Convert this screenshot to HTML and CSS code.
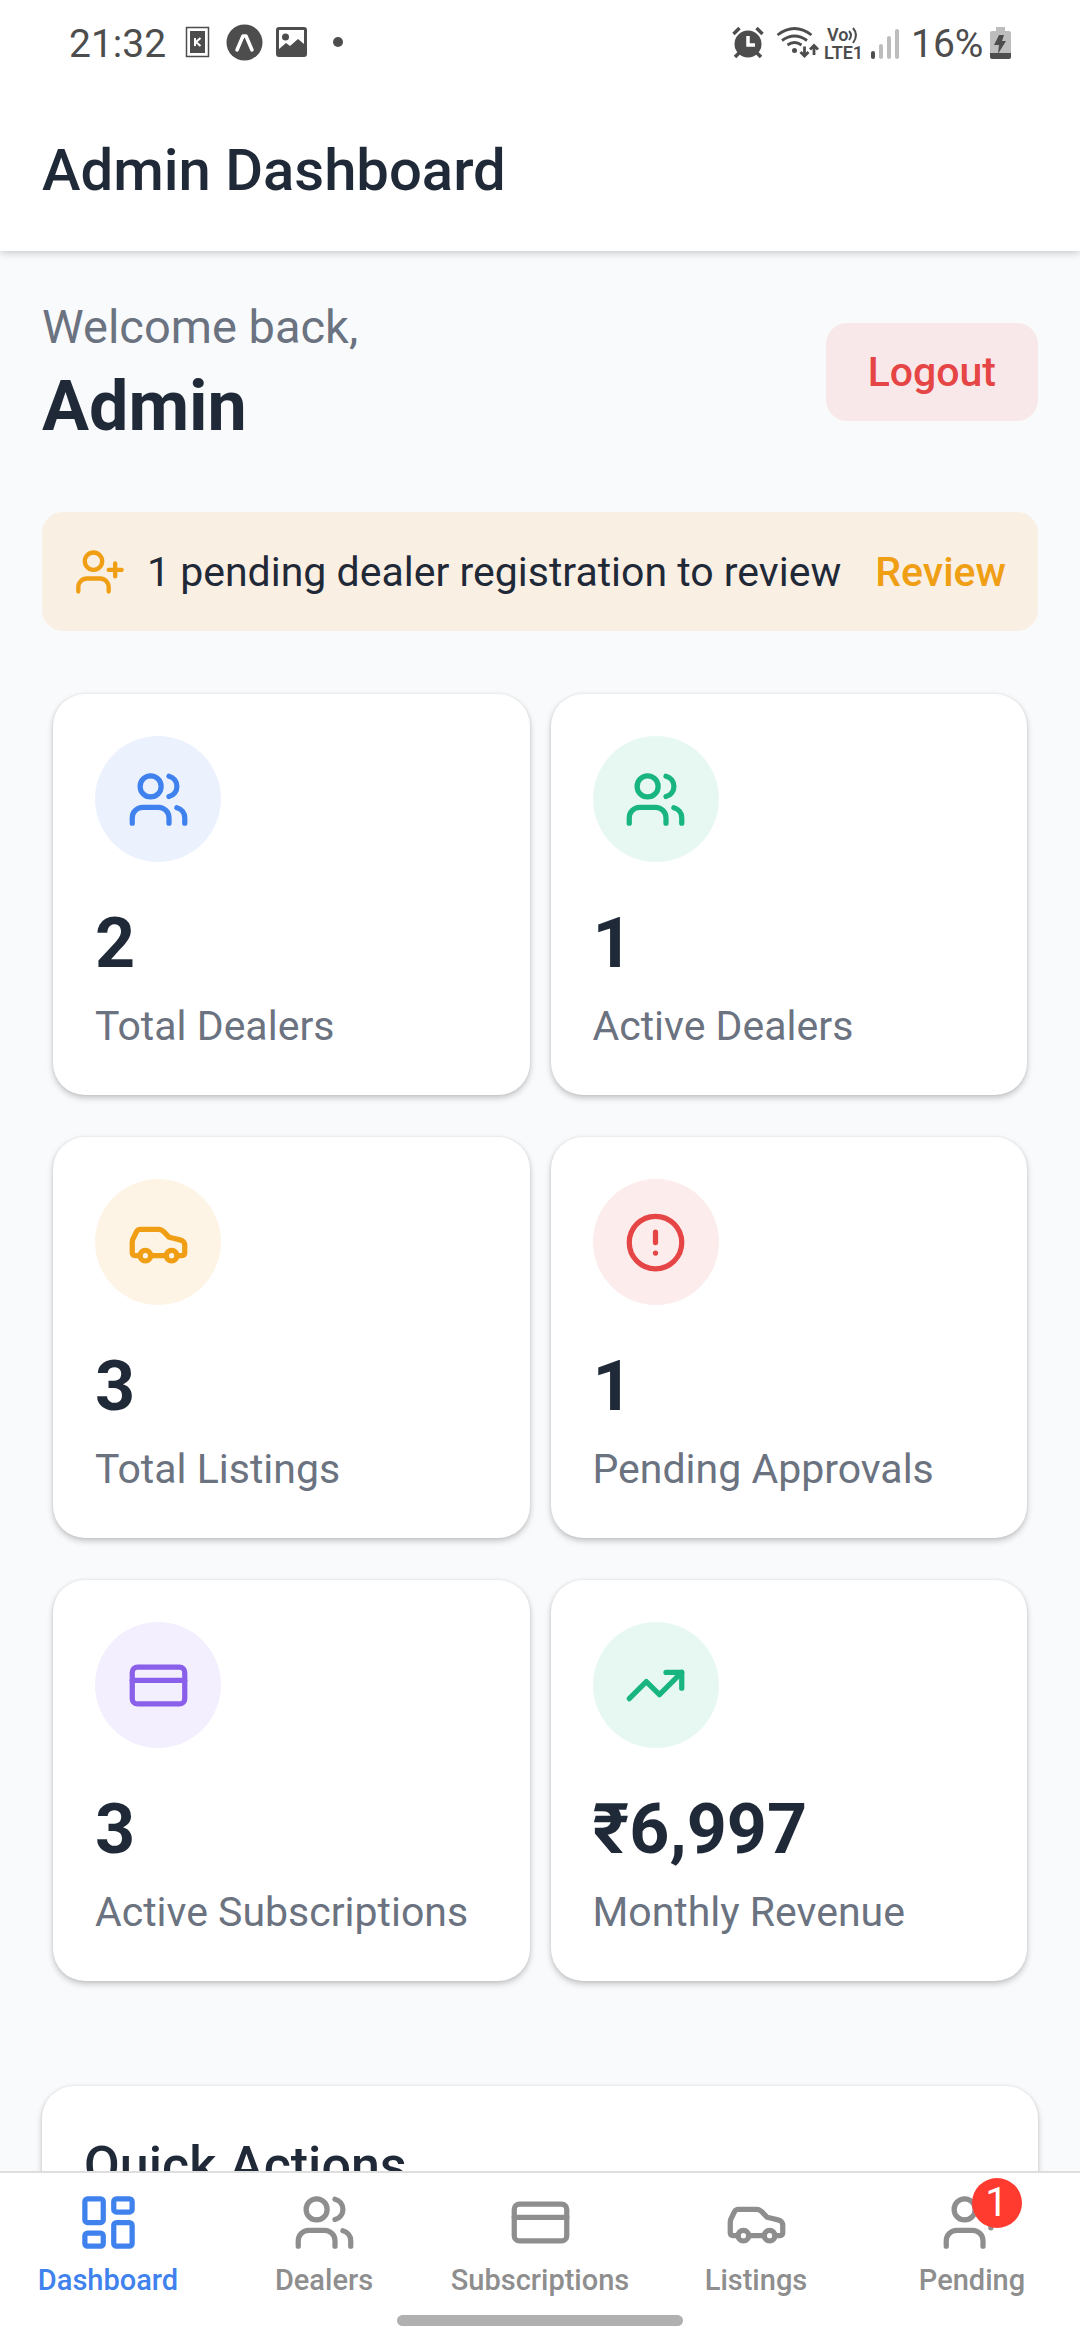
FILE: index.html
```html
<!DOCTYPE html>
<html lang="en">
<head>
<meta charset="utf-8">
<meta name="viewport" content="width=device-width, initial-scale=1">
<title>Admin Dashboard</title>
<link rel="stylesheet" href="styles.css">
</head>
<body>
<svg class="sprite" aria-hidden="true">
  <symbol id="users" viewBox="0 0 24 24"><path d="M16 21v-2a4 4 0 0 0-4-4H6a4 4 0 0 0-4 4v2"/><circle cx="9" cy="7" r="4"/><path d="M22 21v-2a4 4 0 0 0-3-3.87"/><path d="M16 3.13a4 4 0 0 1 0 7.75"/></symbol>
  <symbol id="user-plus" viewBox="0 0 24 24"><path d="M16 21v-2a4 4 0 0 0-4-4H6a4 4 0 0 0-4 4v2"/><circle cx="9" cy="7" r="4"/><path d="M19 8v6M22 11h-6"/></symbol>
  <symbol id="car" viewBox="0 0 24 24"><path d="M19 17h2c.6 0 1-.4 1-1v-3c0-.9-.7-1.7-1.5-1.9C18.7 10.6 16 10 16 10s-1.3-1.4-2.2-2.3c-.5-.4-1.1-.7-1.8-.7H5c-.6 0-1.1.4-1.4.9l-1.4 2.9A3.7 3.7 0 0 0 2 12v4c0 .6.4 1 1 1h2"/><circle cx="7" cy="17" r="2"/><path d="M9 17h6"/><circle cx="17" cy="17" r="2"/></symbol>
  <symbol id="alert" viewBox="0 0 24 24"><circle cx="12" cy="12" r="10"/><path d="M12 8v4M12 16h.01"/></symbol>
  <symbol id="card" viewBox="0 0 24 24"><rect x="2" y="5" width="20" height="14" rx="2"/><path d="M2 10h20"/></symbol>
  <symbol id="trend" viewBox="0 0 24 24"><path d="M22 7l-8.500 8.500-5-5L2 17"/><path d="M16 7h6v6"/></symbol>
  <symbol id="grid" viewBox="0 0 24 24"><rect x="3" y="3" width="7" height="9" rx="1"/><rect x="14" y="3" width="7" height="5" rx="1"/><rect x="14" y="12" width="7" height="9" rx="1"/><rect x="3" y="16" width="7" height="5" rx="1"/></symbol>
</svg>

<div class="app">
  <div class="status">
    <div class="status-left">
      <span class="time">21:32</span>
      <svg width="31" height="36" viewBox="0 0 31 36"><rect x="4.500" y="1.500" width="22" height="29" fill="none" stroke="currentColor" stroke-width="1.500"/><rect x="8" y="5" width="15" height="22"/><path d="M13 12v8M18.500 12l-4.500 4 4.500 4" fill="none" stroke="#fff" stroke-width="2"/></svg>
      <svg width="37" height="36" viewBox="0 0 37 36"><circle cx="18.500" cy="16.500" r="18"/><path d="M11 24l6-14h3l6 14" fill="none" stroke="#fff" stroke-width="3.500" stroke-linecap="round" stroke-linejoin="round"/></svg>
      <svg width="31" height="36" viewBox="0 0 31 36"><path fill-rule="evenodd" d="M3 1h25a3 3 0 0 1 3 3v24a3 3 0 0 1-3 3H3a3 3 0 0 1-3-3V4a3 3 0 0 1 3-3zM3 4v19l7-6 4 3 8-7 6 5V4z"/><circle cx="9.500" cy="11" r="3.500"/></svg>
      <svg width="23" height="36" viewBox="0 0 23 36"><circle cx="18" cy="16" r="5"/></svg>
    </div>
    <div class="status-right">
      <svg width="38" height="36" viewBox="0 0 38 36"><circle cx="16" cy="18" r="13.500"/><path d="M1.500 8l6-6M30.500 8l-6-6M8 26l-5 5M24 26l5 5" stroke="currentColor" stroke-width="3.500"/><path d="M16 10v9h7" fill="none" stroke="#fff" stroke-width="3.500"/></svg>
      <svg width="54" height="36" viewBox="0 0 54 36"><g fill="none" stroke="currentColor" stroke-width="2.800"><path d="M7.500 9q17-13 34 0M12 14.500q12.500-9 25 0M17.500 19q7-5 14 0"/><path d="M34.500 20.500v9M30.500 26l4 4 4-4M44 29v-9M40 23.500l4-4 4 4"/></g><circle cx="24.500" cy="24.500" r="2.500"/></svg>
      <span class="volte"><span class="volte-row">Vo<svg width="11" height="18" viewBox="0 0 11 18"><path d="M1 5q4 4 0 9M5 2q6 7 0 15" fill="none" stroke="currentColor" stroke-width="2"/></svg></span><span>LTE1</span></span>
      <svg width="40" height="36" viewBox="0 0 40 36"><rect x="0" y="25" width="4" height="8" rx="2"/><g class="faint"><rect x="8" y="18" width="4" height="15" rx="2"/><rect x="16" y="10" width="4" height="23" rx="2"/><rect x="24" y="3" width="4" height="30" rx="2"/></g></svg>
      <span class="percent">16%</span>
      <svg width="24" height="36" viewBox="0 0 24 36"><path class="faint" d="M9 1h9v4h4q2 0 2 2v20H3V7q0-2 2-2h4z"/><path d="M3 27h21v4q0 2-2 2H5q-2 0-2-2z"/><path d="M12 9h5l-2 6h4l-8 13 1-9H7z"/></svg>
    </div>
  </div>

  <header class="header"><h1>Admin Dashboard</h1></header>

  <main class="content">
    <section class="greeting">
      <div>
        <p class="welcome">Welcome back,</p>
        <p class="name">Admin</p>
      </div>
      <button class="logout" type="button">Logout</button>
    </section>

    <section class="banner">
      <svg class="icon icon-sm"><use href="#user-plus"/></svg>
      <p>1 pending dealer registration to review</p>
      <a href="#review">Review</a>
    </section>

    <section class="stats">
      <article class="stat"><span class="bubble blue"><svg class="icon"><use href="#users"/></svg></span><p class="value">2</p><p class="label">Total Dealers</p></article>
      <article class="stat"><span class="bubble green"><svg class="icon"><use href="#users"/></svg></span><p class="value">1</p><p class="label">Active Dealers</p></article>
      <article class="stat"><span class="bubble amber"><svg class="icon"><use href="#car"/></svg></span><p class="value">3</p><p class="label">Total Listings</p></article>
      <article class="stat"><span class="bubble red"><svg class="icon"><use href="#alert"/></svg></span><p class="value">1</p><p class="label">Pending Approvals</p></article>
      <article class="stat"><span class="bubble violet"><svg class="icon"><use href="#card"/></svg></span><p class="value">3</p><p class="label">Active Subscriptions</p></article>
      <article class="stat"><span class="bubble green"><svg class="icon"><use href="#trend"/></svg></span><p class="value">₹6,997</p><p class="label">Monthly Revenue</p></article>
    </section>

    <section class="quick"><h2>Quick Actions</h2></section>
  </main>

  <nav class="nav">
    <div class="tabs">
      <a class="tab active" href="#dashboard"><svg class="icon"><use href="#grid"/></svg>Dashboard</a>
      <a class="tab" href="#dealers"><svg class="icon"><use href="#users"/></svg>Dealers</a>
      <a class="tab" href="#subscriptions"><svg class="icon"><use href="#card"/></svg>Subscriptions</a>
      <a class="tab" href="#listings"><svg class="icon"><use href="#car"/></svg>Listings</a>
      <a class="tab" href="#pending"><span class="badged"><svg class="icon"><use href="#user-plus"/></svg><span class="badge">1</span></span>Pending</a>
    </div>
    <div class="home-bar"></div>
  </nav>
</div>
</body>
</html>
```
FILE: styles.css
```css
* { box-sizing: border-box; }

body, h1, h2, p { margin: 0; }

body {
  font-family: Roboto, "Noto Sans", sans-serif;
  color: #1f2937;
  background: #f9fafc;
}

a { text-decoration: none; }

.sprite { display: none; }

.app {
  display: flex;
  flex-direction: column;
  height: 100vh;
}

.icon {
  display: block;
  width: 63px;
  height: 63px;
  flex: none;
  fill: none;
  stroke: currentColor;
  stroke-width: 2;
  stroke-linecap: round;
  stroke-linejoin: round;
}

.icon-sm { width: 52px; height: 52px; }

/* Status bar */
.status {
  flex: none;
  position: relative;
  z-index: 1;
  display: flex;
  justify-content: space-between;
  height: 88px;
  padding: 0 69px;
  background: #fff;
  color: #4d4d4d;
  font-size: 39px;
}

.status svg { flex: none; fill: currentColor; overflow: visible; }
.status .faint { fill: #bdbdbd; }

.status-left, .status-right { display: flex; align-items: center; }
.status-left { gap: 13px; }

.time { min-width: 100px; }
.percent { min-width: 76px; }

.volte {
  width: 47px;
  font-size: 18px;
  font-weight: 600;
  line-height: 18px;
}
.volte > span { display: block; }
.volte .volte-row { display: flex; padding-left: 3px; }

/* Header */
.header {
  flex: none;
  position: relative;
  display: flex;
  align-items: center;
  height: 163px;
  padding: 0 42px;
  background: #fff;
  box-shadow: 0 2px 8px rgba(0, 0, 0, 0.2);
}

.header h1 { font-size: 58px; font-weight: 500; line-height: 68px; }

/* Content */
.content {
  flex: 1;
  min-height: 0;
  overflow: hidden;
  padding: 42px 42px 0;
}

.greeting {
  display: flex;
  align-items: center;
  justify-content: space-between;
  margin-bottom: 61px;
}

.welcome { font-size: 47px; line-height: 68px; color: #6b7280; }
.name { font-size: 70px; line-height: 90px; font-weight: 700; }

.logout {
  padding: 24px 42px;
  border: 0;
  border-radius: 21px;
  background: #f9e8ea;
  color: #e64545;
  font: 500 41px/50px Roboto, sans-serif;
}

.banner {
  display: flex;
  align-items: center;
  gap: 21px;
  height: 119px;
  margin-bottom: 63px;
  padding: 0 32px;
  border-radius: 21px;
  background: #f9efe3;
  color: #f09e14;
  font-size: 41px;
}

.banner p { flex: 1; color: #1f2937; white-space: nowrap; }
.banner a { color: inherit; font-weight: 500; }

.stats {
  display: grid;
  grid-template-columns: 1fr 1fr;
  gap: 42px 21px;
  padding: 0 11px;
  margin-bottom: 105px;
}

.stat, .quick {
  padding: 42px;
  border-radius: 32px;
  background: #fff;
  box-shadow: 0 3px 6px rgba(0, 0, 0, 0.22), 0 0 3px rgba(0, 0, 0, 0.08);
}

.bubble {
  display: grid;
  place-items: center;
  width: 126px;
  height: 126px;
  margin-bottom: 36px;
  border-radius: 50%;
}

.blue { color: #3f82ee; background: #ebf2fe; }
.green { color: #18b581; background: #e7f8f2; }
.amber { color: #f09e14; background: #fef4e6; }
.red { color: #e64545; background: #fdecec; }
.violet { color: #8a5fea; background: #f3effe; }

.value { font-size: 70px; line-height: 90px; font-weight: 700; margin-bottom: 12px; }
.label { font-size: 41px; line-height: 53px; color: #6b7280; }

.quick h2 { font-size: 52px; line-height: 75px; font-weight: 500; }

/* Bottom navigation */
.nav {
  flex: none;
  position: relative;
  padding: 18px 0 14px;
  border-top: 2px solid #dedede;
  background: #fff;
}

.tabs {
  display: grid;
  grid-template-columns: repeat(5, 1fr);
  margin-bottom: 18px;
}

.tab {
  display: flex;
  flex-direction: column;
  align-items: center;
  gap: 9px;
  color: #8e8e8f;
  font-size: 29px;
  font-weight: 500;
  line-height: 34px;
}

.tab.active { color: #3f82ee; }

.badged { position: relative; }

.badge {
  position: absolute;
  top: -13px;
  left: 31px;
  width: 50px;
  height: 50px;
  border-radius: 50%;
  background: #ff3b30;
  color: #fff;
  font-size: 40px;
  font-weight: 400;
  line-height: 50px;
  text-align: center;
}

.home-bar {
  width: 286px;
  height: 11px;
  margin: 0 auto;
  border-radius: 6px;
  background: #b0b0b0;
}
```
